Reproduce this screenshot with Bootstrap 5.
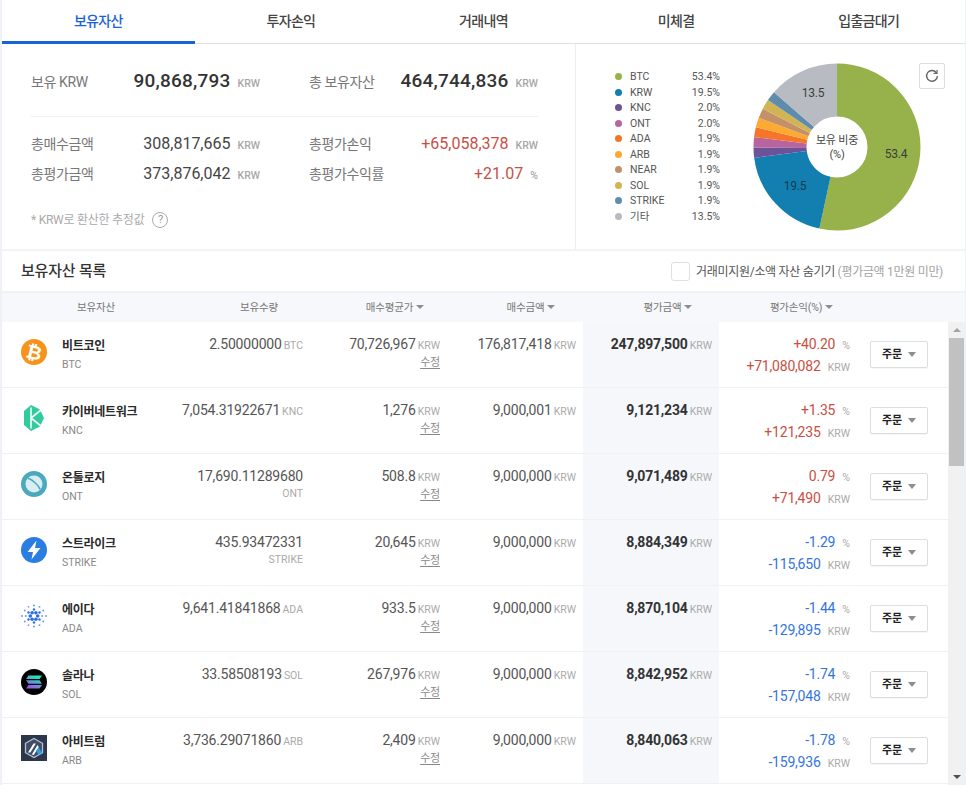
<!DOCTYPE html>
<html lang="ko">
<head>
<meta charset="utf-8">
<title>보유자산</title>
<link href="https://cdn.jsdelivr.net/npm/bootstrap@5.3.0/dist/css/bootstrap.min.css" rel="stylesheet">
<style>
html,body{height:785px;overflow:hidden}
body{margin:0;background:#eef1f6;font-family:Roboto,"Noto Sans CJK KR",sans-serif;color:#333;font-size:13px;letter-spacing:-.2px}
.shell{margin:0 1px 0 2px;background:#fff;height:785px;display:flex;flex-direction:column;overflow:hidden}
.tabbar{height:44px;border-bottom:1px solid #dfe1e5;flex:none}
.tabbar .nav-link{height:44px;padding:12px 0 0;color:#444;font-size:14px;font-weight:500;letter-spacing:-.7px;line-height:18px;border-radius:0}
.tabbar .nav-link.active{color:#1763d8;border-bottom:3px solid #1763d8;background:none}
.topzone{height:207px;flex:none;border-bottom:2px solid #f1f3f6}
.sumpane{width:574px;padding:0 37px 0 29px;border-right:1px solid #eceef1;flex:none}
.sumgrid{display:grid;grid-template-columns:1fr 1fr;column-gap:49px}
.sumrow{display:flex;align-items:baseline;justify-content:space-between}
.lab{color:#777;font-size:14px;letter-spacing:-.4px}
.unit{color:#a7a7a7;font-size:10.5px;font-weight:500;margin-left:7px;letter-spacing:0}
.big{font-size:19px;font-weight:500;letter-spacing:.2px;color:#333}
.mid{font-size:16px;color:#444;letter-spacing:0}
.hero{padding-top:23px;height:73px;border-bottom:1px solid #eef0f2}
.rowa{padding-top:15px;height:30px;box-sizing:content-box}
.rowb{height:31px;padding-top:0;margin-top:0}
.up{color:#c94f43}.down{color:#3575de}
.note{color:#aaa;font-size:12px;margin-top:18px;display:flex;align-items:center;gap:8px;letter-spacing:-.25px}
.qmark{width:16px;height:16px;border:1.3px solid #aaa;border-radius:50%;font-size:11px;line-height:13px;text-align:center;color:#999}
.chartpane{flex:1;min-width:0;padding-left:39px;position:relative}
.legend{width:105px;padding-top:25px;flex:none}
.legitem{height:15.5px;display:flex;align-items:center;font-size:10.5px;line-height:15.5px;color:#555;letter-spacing:0}
.dot{width:7px;height:7px;border-radius:50%;margin-right:8px;flex:none}
.legpct{margin-left:auto}
.donutbox{position:relative;width:168px;height:168px;margin:19px 0 0 33px;flex:none}
.donutbox svg{display:block}
.donutmid{position:absolute;left:54px;top:71px;width:60px;text-align:center;font-size:11px;line-height:14px;color:#444;letter-spacing:-.2px}
.reload{position:absolute;right:20px;top:19px;width:26px;height:26px;border:1px solid #dcdde0;background:#fff;border-radius:2px;padding:0;display:flex;align-items:center;justify-content:center}
.listhead{height:42px;flex:none;padding:1px 22px 0 19px;border-bottom:2px solid #f0f2f5}
.listtitle{font-size:15px;font-weight:500;color:#333;letter-spacing:-.2px}
.hidecheck{width:19px;height:19px;margin:0 6px 0 0;border:1px solid #dfe0e3;border-radius:2px;box-shadow:none}
.hidetxt{font-size:12px;color:#555;letter-spacing:-.3px}
.hidetxt span{color:#a3a3a3}
.colhead{display:grid;grid-template-columns:188px 138px 134px 138px 136px 131px 1fr;height:29px;flex:none;background:#f7f8fb;font-size:10.5px;color:#777;align-items:center;text-align:center;letter-spacing:-.2px}
.sortcaret{display:inline-block;width:0;height:0;border:4px solid transparent;border-top:4px solid #8b8d96;border-bottom:0;margin-left:3px;vertical-align:2px}
.listwrap{flex:1;min-height:0;display:flex;overflow:hidden}
.listbody{flex:1;min-width:0}
.assetrow{display:grid;grid-template-columns:173px 135px 137px 136px 136px 138px 1fr;height:66px;border-bottom:1px solid #f0f1f3;text-align:right;font-size:14px;color:#555}
.nmcell{display:flex;text-align:left;padding:17px 0 0 19px}
.coin{width:26px;height:26px;flex:none;margin-right:15px}
.nm{font-size:12px;font-weight:700;color:#2a2a2a;line-height:18px;margin-top:-2px;letter-spacing:-.3px}
.cd{font-size:10.5px;color:#888;line-height:20px;letter-spacing:0}
.valcell{padding:13px 7px 0 0;line-height:18px}
.su{color:#aaa;font-size:10.5px;margin-left:2px;letter-spacing:0}
.su.wrapunit{display:block;margin:0}
.fix{display:block;color:#888;font-size:11px;margin-top:-1px;text-decoration:underline;text-underline-offset:2px}
.evalcell{background:#f5f7fb;font-weight:700;color:#333}
.evalcell .su{font-weight:400}
.plcell{padding:12px 7px 0 0;line-height:20px}
.plcell .su{margin-left:7px;display:inline-block;min-width:0}
.actcell{padding-top:19px;padding-left:13px;text-align:left}
.orderbtn{width:58px;height:27px;padding:0;background:#fff;border:1px solid #dcdde0;border-radius:2px;font-size:11px;font-weight:700;color:#222;line-height:24px;letter-spacing:-.2px;box-shadow:0 1px 1px rgba(0,0,0,.04)}
.orderbtn::after{border-top:5px solid #8d8d8d;border-left:4.5px solid transparent;border-right:4.5px solid transparent;border-bottom:0;margin-left:6px;vertical-align:1px}
.scrolltrack{width:17px;flex:none;background:#f1f1f1;display:flex;flex-direction:column;align-items:center}
.arrowtop,.arrowbtm{width:0;height:0;border-left:4px solid transparent;border-right:4px solid transparent}
.arrowtop{border-bottom:4px solid #a3a3a3;margin:6px 0 6px}
.arrowbtm{border-top:4px solid #505050;margin:auto 0 6px}
.thumb{width:15px;height:128px;background:#c1c1c1}
</style>
</head>
<body>
<div class="shell">
  <ul class="nav nav-justified tabbar">
    <li class="nav-item"><a class="nav-link active" href="#">보유자산</a></li>
    <li class="nav-item"><a class="nav-link" href="#">투자손익</a></li>
    <li class="nav-item"><a class="nav-link" href="#">거래내역</a></li>
    <li class="nav-item"><a class="nav-link" href="#">미체결</a></li>
    <li class="nav-item"><a class="nav-link" href="#">입출금대기</a></li>
  </ul>

  <div class="d-flex topzone">
    <div class="sumpane">
      <div class="sumgrid hero">
        <div class="sumrow"><span class="lab">보유 KRW</span><span><span class="big">90,868,793</span><span class="unit">KRW</span></span></div>
        <div class="sumrow"><span class="lab">총 보유자산</span><span><span class="big">464,744,836</span><span class="unit">KRW</span></span></div>
      </div>
      <div class="sumgrid rowa">
        <div class="sumrow"><span class="lab">총매수금액</span><span><span class="mid">308,817,665</span><span class="unit">KRW</span></span></div>
        <div class="sumrow"><span class="lab">총평가손익</span><span><span class="mid up">+65,058,378</span><span class="unit">KRW</span></span></div>
      </div>
      <div class="sumgrid rowb">
        <div class="sumrow"><span class="lab">총평가금액</span><span><span class="mid">373,876,042</span><span class="unit">KRW</span></span></div>
        <div class="sumrow"><span class="lab">총평가수익률</span><span><span class="mid up">+21.07</span><span class="unit">%</span></span></div>
      </div>
      <div class="note"><span>* KRW로 환산한 추정값</span><span class="qmark">?</span></div>
    </div>

    <div class="chartpane d-flex">
      <div class="legend">
        <div class="legitem"><i class="dot" style="background:#97b14b"></i>BTC<span class="legpct">53.4%</span></div>
        <div class="legitem"><i class="dot" style="background:#127fb0"></i>KRW<span class="legpct">19.5%</span></div>
        <div class="legitem"><i class="dot" style="background:#6d5297"></i>KNC<span class="legpct">2.0%</span></div>
        <div class="legitem"><i class="dot" style="background:#b8649f"></i>ONT<span class="legpct">2.0%</span></div>
        <div class="legitem"><i class="dot" style="background:#f5762a"></i>ADA<span class="legpct">1.9%</span></div>
        <div class="legitem"><i class="dot" style="background:#fdaa33"></i>ARB<span class="legpct">1.9%</span></div>
        <div class="legitem"><i class="dot" style="background:#c49067"></i>NEAR<span class="legpct">1.9%</span></div>
        <div class="legitem"><i class="dot" style="background:#d2b454"></i>SOL<span class="legpct">1.9%</span></div>
        <div class="legitem"><i class="dot" style="background:#5f8cad"></i>STRIKE<span class="legpct">1.9%</span></div>
        <div class="legitem"><i class="dot" style="background:#b9bbc2"></i>기타<span class="legpct">13.5%</span></div>
      </div>
      <div class="donutbox">
        <svg width="168" height="168" viewBox="0 0 168 168">
          <g transform="rotate(-90 84 84)" fill="none" stroke-width="53">
            <circle cx="84" cy="84" r="57" pathLength="100" stroke="#97b14b" stroke-dasharray="53.4 46.6" stroke-dashoffset="0"/>
            <circle cx="84" cy="84" r="57" pathLength="100" stroke="#127fb0" stroke-dasharray="19.5 80.5" stroke-dashoffset="-53.4"/>
            <circle cx="84" cy="84" r="57" pathLength="100" stroke="#6d5297" stroke-dasharray="2 98" stroke-dashoffset="-72.9"/>
            <circle cx="84" cy="84" r="57" pathLength="100" stroke="#b8649f" stroke-dasharray="2 98" stroke-dashoffset="-74.9"/>
            <circle cx="84" cy="84" r="57" pathLength="100" stroke="#f5762a" stroke-dasharray="1.9 98.1" stroke-dashoffset="-76.9"/>
            <circle cx="84" cy="84" r="57" pathLength="100" stroke="#fdaa33" stroke-dasharray="1.9 98.1" stroke-dashoffset="-78.8"/>
            <circle cx="84" cy="84" r="57" pathLength="100" stroke="#c49067" stroke-dasharray="1.9 98.1" stroke-dashoffset="-80.7"/>
            <circle cx="84" cy="84" r="57" pathLength="100" stroke="#d2b454" stroke-dasharray="1.9 98.1" stroke-dashoffset="-82.6"/>
            <circle cx="84" cy="84" r="57" pathLength="100" stroke="#5f8cad" stroke-dasharray="1.9 98.1" stroke-dashoffset="-84.5"/>
            <circle cx="84" cy="84" r="57" pathLength="100" stroke="#b9bbc2" stroke-dasharray="13.6 86.4" stroke-dashoffset="-86.4"/>
          </g>
          <g font-family="Roboto,sans-serif" font-size="12" fill="#3a3f3a" text-anchor="middle">
            <text x="143" y="95">53.4</text><text x="42" y="127" fill="#123a50">19.5</text><text x="60" y="34">13.5</text>
          </g>
        </svg>
        <div class="donutmid">보유 비중<br>(%)</div>
      </div>
      <button class="reload" type="button" aria-label="새로고침">
        <svg width="14" height="14" viewBox="0 0 14 14" fill="none" stroke="#666" stroke-width="1.4"><path d="M11.6 4A5.4 5.4 0 1 0 12.4 7"/><path d="M12 1v3.4H8.6" stroke-width="1.2"/></svg>
      </button>
    </div>
  </div>

  <div class="d-flex align-items-center justify-content-between listhead">
    <span class="listtitle">보유자산 목록</span>
    <label class="d-flex align-items-center hidetxt"><input class="form-check-input hidecheck" type="checkbox"><div>거래미지원/소액 자산 숨기기 <span>(평가금액 1만원 미만)</span></div></label>
  </div>

  <div class="colhead">
    <div>보유자산</div><div>보유수량</div><div>매수평균가<i class="sortcaret"></i></div><div>매수금액<i class="sortcaret"></i></div><div>평가금액<i class="sortcaret"></i></div><div>평가손익(%)<i class="sortcaret"></i></div><div></div>
  </div>

  <div class="listwrap">
    <div class="listbody">

      <div class="assetrow">
        <div class="nmcell">
          <svg class="coin" viewBox="0 0 26 26"><circle cx="13" cy="13" r="13" fill="#f7931a"/><text x="13" y="20" text-anchor="middle" font-family="DejaVu Sans,sans-serif" font-weight="700" font-size="19" fill="#fff" transform="rotate(14 13 13)">₿</text></svg>
          <div><div class="nm">비트코인</div><div class="cd">BTC</div></div>
        </div>
        <div class="valcell">2.50000000<span class="su">BTC</span></div>
        <div class="valcell">70,726,967<span class="su">KRW</span><a class="fix" href="#">수정</a></div>
        <div class="valcell">176,817,418<span class="su">KRW</span></div>
        <div class="valcell evalcell">247,897,500<span class="su">KRW</span></div>
        <div class="plcell up"><div>+40.20<span class="su">%</span></div><div>+71,080,082<span class="su">KRW</span></div></div>
        <div class="actcell"><button class="btn dropdown-toggle orderbtn" type="button">주문</button></div>
      </div>

      <div class="assetrow">
        <div class="nmcell">
          <svg class="coin" viewBox="0 0 26 26"><path d="M10 0l9 4.500 4 8.500-4 8.500L10 26l-7-6V6z" fill="#31cb9e"/><path d="M10 2.500V23.500M10 13l10-8M10 13l10 8" stroke="#eafaf5" stroke-width="1.7" fill="none"/></svg>
          <div><div class="nm">카이버네트워크</div><div class="cd">KNC</div></div>
        </div>
        <div class="valcell">7,054.31922671<span class="su">KNC</span></div>
        <div class="valcell">1,276<span class="su">KRW</span><a class="fix" href="#">수정</a></div>
        <div class="valcell">9,000,001<span class="su">KRW</span></div>
        <div class="valcell evalcell">9,121,234<span class="su">KRW</span></div>
        <div class="plcell up"><div>+1.35<span class="su">%</span></div><div>+121,235<span class="su">KRW</span></div></div>
        <div class="actcell"><button class="btn dropdown-toggle orderbtn" type="button">주문</button></div>
      </div>

      <div class="assetrow">
        <div class="nmcell">
          <svg class="coin" viewBox="0 0 26 26"><circle cx="13" cy="13" r="13" fill="#4aa9bd"/><circle cx="13" cy="13" r="8.500" fill="#d9eef2"/><path d="M7 7.500c3 0 11 7 12 11" stroke="#4aa9bd" stroke-width="1.600" fill="none"/></svg>
          <div><div class="nm">온톨로지</div><div class="cd">ONT</div></div>
        </div>
        <div class="valcell">17,690.11289680<span class="su wrapunit">ONT</span></div>
        <div class="valcell">508.8<span class="su">KRW</span><a class="fix" href="#">수정</a></div>
        <div class="valcell">9,000,000<span class="su">KRW</span></div>
        <div class="valcell evalcell">9,071,489<span class="su">KRW</span></div>
        <div class="plcell up"><div>0.79<span class="su">%</span></div><div>+71,490<span class="su">KRW</span></div></div>
        <div class="actcell"><button class="btn dropdown-toggle orderbtn" type="button">주문</button></div>
      </div>

      <div class="assetrow">
        <div class="nmcell">
          <svg class="coin" viewBox="0 0 26 26"><circle cx="13" cy="13" r="13" fill="#2a7de1"/><path d="M15.500 3.500L6.500 15H12L10.500 22.500 19.500 11H14z" fill="#fff"/></svg>
          <div><div class="nm">스트라이크</div><div class="cd">STRIKE</div></div>
        </div>
        <div class="valcell">435.93472331<span class="su wrapunit">STRIKE</span></div>
        <div class="valcell">20,645<span class="su">KRW</span><a class="fix" href="#">수정</a></div>
        <div class="valcell">9,000,000<span class="su">KRW</span></div>
        <div class="valcell evalcell">8,884,349<span class="su">KRW</span></div>
        <div class="plcell down"><div>-1.29<span class="su">%</span></div><div>-115,650<span class="su">KRW</span></div></div>
        <div class="actcell"><button class="btn dropdown-toggle orderbtn" type="button">주문</button></div>
      </div>

      <div class="assetrow">
        <div class="nmcell">
          <svg class="coin" viewBox="0 0 26 26" fill="#2f6fe4">
            <circle cx="9.300" cy="13" r="1.800"/><circle cx="16.700" cy="13" r="1.800"/><circle cx="11.100" cy="9.800" r="1.800"/><circle cx="14.900" cy="9.800" r="1.800"/><circle cx="11.100" cy="16.200" r="1.800"/><circle cx="14.900" cy="16.200" r="1.800"/>
            <circle cx="13" cy="6.500" r="1.200"/><circle cx="13" cy="19.500" r="1.200"/><circle cx="7.500" cy="9.500" r="1.200"/><circle cx="18.500" cy="9.500" r="1.200"/><circle cx="7.500" cy="16.500" r="1.200"/><circle cx="18.500" cy="16.500" r="1.200"/>
            <g opacity=".7"><circle cx="13" cy="2.500" r="1"/><circle cx="13" cy="23.500" r="1"/><circle cx="7.500" cy="3.800" r=".9"/><circle cx="18.500" cy="3.800" r=".9"/><circle cx="7.500" cy="22.200" r=".9"/><circle cx="18.500" cy="22.200" r=".9"/><circle cx="3.800" cy="7.500" r=".9"/><circle cx="22.200" cy="7.500" r=".9"/><circle cx="3.800" cy="18.500" r=".9"/><circle cx="22.200" cy="18.500" r=".9"/><circle cx="1" cy="13" r=".9"/><circle cx="25" cy="13" r=".9"/><circle cx="4.800" cy="13" r="1"/><circle cx="21.200" cy="13" r="1"/></g>
          </svg>
          <div><div class="nm">에이다</div><div class="cd">ADA</div></div>
        </div>
        <div class="valcell">9,641.41841868<span class="su">ADA</span></div>
        <div class="valcell">933.5<span class="su">KRW</span><a class="fix" href="#">수정</a></div>
        <div class="valcell">9,000,000<span class="su">KRW</span></div>
        <div class="valcell evalcell">8,870,104<span class="su">KRW</span></div>
        <div class="plcell down"><div>-1.44<span class="su">%</span></div><div>-129,895<span class="su">KRW</span></div></div>
        <div class="actcell"><button class="btn dropdown-toggle orderbtn" type="button">주문</button></div>
      </div>

      <div class="assetrow">
        <div class="nmcell">
          <svg class="coin" viewBox="0 0 26 26"><defs><linearGradient id="solg" x1="0" y1="1" x2=".6" y2="0"><stop offset="0" stop-color="#b13cf2"/><stop offset=".5" stop-color="#6a8fd8"/><stop offset="1" stop-color="#14f1b5"/></linearGradient></defs><circle cx="13" cy="13" r="13" fill="#000"/><path d="M7.500 6.500H21L18.500 10H5zM5 11.300H18.500L21 14.700H7.500zM7.500 16H21L18.500 19.500H5z" fill="url(#solg)"/></svg>
          <div><div class="nm">솔라나</div><div class="cd">SOL</div></div>
        </div>
        <div class="valcell">33.58508193<span class="su">SOL</span></div>
        <div class="valcell">267,976<span class="su">KRW</span><a class="fix" href="#">수정</a></div>
        <div class="valcell">9,000,000<span class="su">KRW</span></div>
        <div class="valcell evalcell">8,842,952<span class="su">KRW</span></div>
        <div class="plcell down"><div>-1.74<span class="su">%</span></div><div>-157,048<span class="su">KRW</span></div></div>
        <div class="actcell"><button class="btn dropdown-toggle orderbtn" type="button">주문</button></div>
      </div>

      <div class="assetrow">
        <div class="nmcell">
          <svg class="coin" viewBox="0 0 26 26"><rect width="26" height="26" fill="#2d374b"/><path d="M13 3.500l8.500 4.800v9.400L13 22.500l-8.500-4.800V8.300z" fill="#3f4d66" stroke="#b5c3d2" stroke-width="1.300"/><path d="M7 17.500L12.500 8.500h2.400L9.400 17.500zM10.800 19.500L16.500 10l1.300 2-5 8z" fill="#fff"/><path d="M18 12.500l3 5.200-3.500 2-2.500-4z" fill="#28a0f0"/></svg>
          <div><div class="nm">아비트럼</div><div class="cd">ARB</div></div>
        </div>
        <div class="valcell">3,736.29071860<span class="su">ARB</span></div>
        <div class="valcell">2,409<span class="su">KRW</span><a class="fix" href="#">수정</a></div>
        <div class="valcell">9,000,000<span class="su">KRW</span></div>
        <div class="valcell evalcell">8,840,063<span class="su">KRW</span></div>
        <div class="plcell down"><div>-1.78<span class="su">%</span></div><div>-159,936<span class="su">KRW</span></div></div>
        <div class="actcell"><button class="btn dropdown-toggle orderbtn" type="button">주문</button></div>
      </div>

    </div>
    <div class="scrolltrack"><i class="arrowtop"></i><div class="thumb"></div><i class="arrowbtm"></i></div>
  </div>
</div>
<script src="https://cdn.jsdelivr.net/npm/bootstrap@5.3.0/dist/js/bootstrap.bundle.min.js"></script>
</body>
</html>
